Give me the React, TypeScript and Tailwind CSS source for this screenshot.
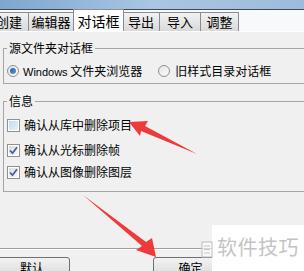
import React from 'react';

const tabs = [
    { label: '创建', w: 'w-[40px]', active: false },
    { label: '编辑器', w: 'w-[46px]', active: false },
    { label: '对话框', w: 'w-[51px]', active: true },
    { label: '导出', w: 'w-[38px]', active: false },
    { label: '导入', w: 'w-[42px]', active: false },
    { label: '调整', w: 'w-[39px]', active: false },
];

function Radio({ checked }: { checked?: boolean }) {
    return (
        <span className="w-[12px] h-[12px] rounded-full border border-[#8c8f94] bg-gradient-to-br from-[#e4e4e4] to-[#fbfbfb] flex items-center justify-center shrink-0">
            {checked && <span className="w-[6px] h-[6px] rounded-full bg-gradient-to-br from-[#2a5f9e] to-[#5d9ad8]" />}
        </span>
    );
}

function Check({ checked }: { checked?: boolean }) {
    return (
        <span className="w-[13px] h-[13px] border border-[#8e8f8f] bg-white p-[1px] shrink-0 flex">
            <span className={`flex-1 flex items-center justify-center ${checked ? 'bg-gradient-to-br from-[#dcdcdc] to-[#f8f8f8]' : 'bg-gradient-to-br from-[#c2dcef] to-[#e6f1f9]'}`}>
                {checked && (
                    <svg width="9" height="9" viewBox="0 0 9 9">
                        <path d="M1 4.5 L3.5 7.2 L8 1.2" fill="none" stroke="#4a5f97" strokeWidth="1.8" />
                    </svg>
                )}
            </span>
        </span>
    );
}

export default function App() {
    return (
        <div
            className="relative w-[304px] h-[271px] overflow-hidden bg-[#f0f0f0] text-[12px] leading-[14px] text-black"
            style={{ fontFamily: '"Noto Sans CJK SC", "DejaVu Sans", sans-serif' }}
        >
            {/* title strip */}
            <div className="h-[10px] bg-gradient-to-r from-[#7ea6cf] via-[#a9c6e4] to-[#9dbbdc] border-b border-[#3d4a5a]" />

            {/* tabs */}
            <div className="h-[21px] flex items-end bg-[#f7f9fb] -ml-[11px] relative">
                {tabs.map(t => (
                    <div
                        key={t.label}
                        className={
                            t.active
                                ? `${t.w} h-[22px] -mx-[1px] z-10 bg-white border border-b-0 border-[#898c95] flex items-center justify-center text-[14px]`
                                : `${t.w} h-[19px] bg-gradient-to-b from-[#f2f2f2] to-[#d9d9d9] border border-b-0 border-[#898c95] flex items-center justify-center text-[13px] -ml-[1px] first:ml-0`
                        }
                    >
                        {t.label}
                    </div>
                ))}
            </div>
            <div className="h-[1px] bg-white" />

            {/* panel */}
            <div className="pl-[3px] pt-[9px]">
                <fieldset className="border border-[#a5a5a5] border-r-0 pl-[3px] pb-[5px]">
                    <legend className="px-[2px] leading-[14px] text-[12px]">源文件夹对话框</legend>
                    <div className="flex items-center mt-[9px] h-[14px]">
                        <Radio checked />
                        <span className="ml-[4px] whitespace-nowrap">
                            <span className="text-[11px]" style={{ fontFamily: '"Liberation Sans", sans-serif' }}>Windows</span> 文件夹浏览器
                        </span>
                        <span className="ml-[16px]"><Radio /></span>
                        <span className="ml-[5px] whitespace-nowrap">旧样式目录对话框</span>
                    </div>
                </fieldset>

                <fieldset className="mt-[10px] border border-[#a5a5a5] border-r-0 pl-[3px] pb-[12px]">
                    <legend className="px-[2px] leading-[14px] text-[12px]">信息</legend>
                    <div className="flex items-center mt-[10px] h-[14px]">
                        <Check />
                        <span className="ml-[4px] whitespace-nowrap">确认从库中删除项目</span>
                    </div>
                    <div className="flex items-center mt-[11px] h-[14px]">
                        <Check checked />
                        <span className="ml-[4px] whitespace-nowrap">确认从光标删除帧</span>
                    </div>
                    <div className="flex items-center mt-[8px] h-[14px]">
                        <Check checked />
                        <span className="ml-[4px] whitespace-nowrap">确认从图像删除图层</span>
                    </div>
                </fieldset>
            </div>

            {/* bottom buttons */}
            <div className="mt-[56px] border-t border-[#a0a0a0]">
                <div className="h-[1px] bg-white" />
                <div className="flex mt-[7px]">
                    <button className="-ml-[6px] w-[76px] h-[23px] rounded-[3px] border border-[#707070] bg-gradient-to-b from-[#f2f2f2] to-[#d8d8d8] text-[12px] pt-[3px] flex justify-center">
                        默认
                    </button>
                    <button className="ml-[83px] w-[75px] h-[23px] rounded-[3px] border border-[#707070] bg-gradient-to-b from-[#f2f2f2] to-[#d8d8d8] text-[12px] pt-[3px] flex justify-center">
                        确定
                    </button>
                </div>
            </div>

            {/* red arrows */}
            <svg className="absolute inset-0 pointer-events-none" width="304" height="271" viewBox="0 0 304 271">
                <polygon points="129,122 148,121 145,126 197,154 141,131 140,136" fill="#ee3a3a" />
                <polygon points="83,195 146,242 152,238 156,257 136,250 142,246" fill="#ee3a3a" />
            </svg>

            {/* watermark */}
            <div className="absolute right-0 bottom-0 w-[92px] h-[46px] bg-white flex items-center pl-[5px] pb-[2px]">
                <span className="whitespace-nowrap text-[20px] leading-[24px] text-[#c4c4c4] tracking-[0.5px]">软件技巧</span>
            </div>
            <svg className="absolute left-[201px] top-[241px]" width="12" height="18" viewBox="0 0 12 18">
                <rect x="1" y="1" width="10" height="15" fill="#ffffff" fillOpacity="0.6" stroke="#bdbdbd" />
                <path d="M3 5 H9 M3 8.5 H9 M3 12 H9" stroke="#c4c4c4" />
            </svg>
        </div>
    );
}
